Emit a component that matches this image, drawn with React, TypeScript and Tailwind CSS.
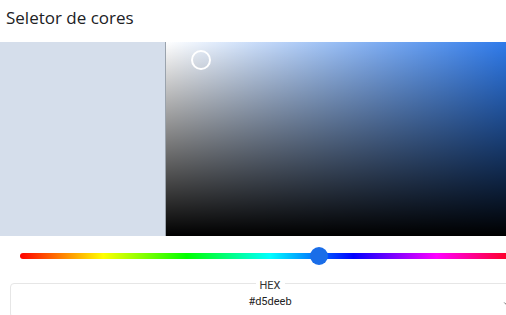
import { ChevronDown } from 'lucide-react';

const HUE = '#1a6de8';

export default function App() {
  return (
    <div className="w-[506px] h-[315px] overflow-hidden bg-white" style={{ fontFamily: 'Roboto, "Open Sans", sans-serif' }}>
      <div className="w-[540px]">
        {/* Title */}
        <h1 className="h-[42px] pl-[6px] pt-[6px] text-[17px] leading-[24px] text-[#202124]" style={{ fontFamily: '"Open Sans", Roboto, sans-serif' }}>
          Seletor de cores
        </h1>

        {/* Preview + saturation area */}
        <div className="flex h-[194px]">
          <div className="w-[165px] bg-[#d5deeb]" />
          <div className="relative flex-1 border-l border-[#9aa3ad]" style={{ backgroundColor: HUE }}>
            <div className="absolute inset-0 bg-gradient-to-r from-white to-transparent" />
            <div className="absolute inset-0 bg-gradient-to-b from-transparent to-black" />
            <div className="absolute left-[25px] top-[8px] w-[20px] h-[20px] rounded-full border-2 border-white" />
          </div>
        </div>

        {/* Hue slider */}
        <div className="relative mx-[20px] mt-[17px] h-[6px] rounded-full bg-[linear-gradient(to_right,#ff0000,#ffff00,#00ff00,#00ffff,#0000ff,#ff00ff,#ff0000)]">
          <div className="absolute left-[290px] top-[-6px] w-[18px] h-[18px] rounded-full" style={{ backgroundColor: HUE }} />
        </div>

        {/* HEX field */}
        <fieldset className="mx-[10px] mt-[15px] h-[44px] rounded-[4px] border border-[#e6e6e6]">
          <legend className="mx-auto px-[4px] pt-[6px] text-[11px] leading-[12px] text-[#333]">HEX</legend>
          <div className="mt-[2px] grid grid-cols-[1fr_auto_1fr] items-center">
            <span />
            <span className="text-[11px] leading-[16px] text-[#222]">#d5deeb</span>
            <span className="flex justify-end pr-[17px] pt-[3px]">
              <ChevronDown className="w-[10px] h-[10px] text-[#555]" strokeWidth={2} />
            </span>
          </div>
        </fieldset>
      </div>
    </div>
  );
}
